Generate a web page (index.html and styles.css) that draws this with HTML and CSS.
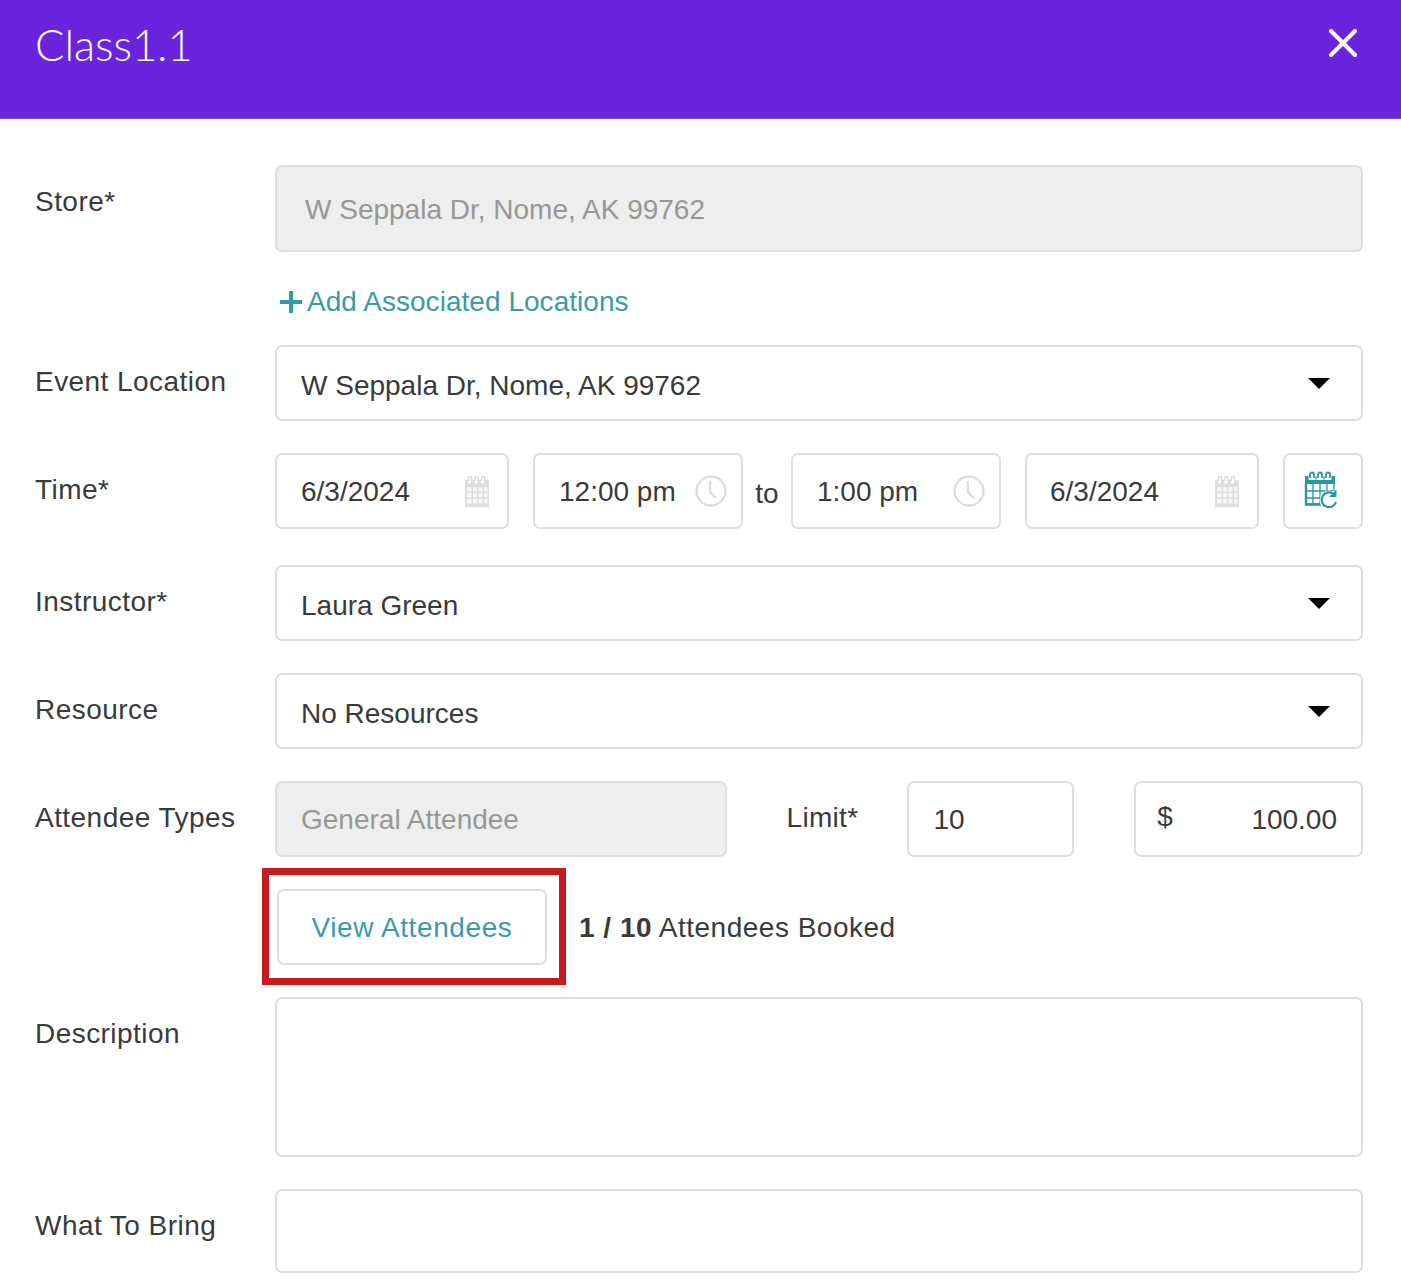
FILE: index.html
```html
<!DOCTYPE html>
<html lang="en">
<head>
<meta charset="utf-8">
<title>Class1.1</title>
<link rel="stylesheet" href="styles.css">
</head>
<body>
<svg class="defs" width="0" height="0" aria-hidden="true">
  <symbol id="cal" viewBox="0 0 26 33">
    <path fill="currentColor" d="M1 5h3v3.500h3V5h3.500v3.500h3V5H17v3.500h3V5h5v27H1z"/>
    <path fill="none" stroke="currentColor" stroke-width="1.500" d="M4.500 6V3a1.500 1.500 0 0 1 3 0v3M11 6V3a1.500 1.500 0 0 1 3 0v3M17.500 6V3a1.500 1.500 0 0 1 3 0v3"/>
    <path fill="#fff" opacity=".75" d="M3 12h4.500v4.500H3zM9 12h4v4.500H9zM14.500 12h4v4.500h-4zM20 12h3.500v4.500H20zM3 18h4.500v4.500H3zM9 18h4v4.500H9zM14.500 18h4v4.500h-4zM20 18h3.500v4.500H20zM3 24h4.500v4.500H3zM9 24h4v4.500H9zM14.500 24h4v4.500h-4zM20 24h3.500v4.500H20z"/>
  </symbol>
  <symbol id="clock" viewBox="0 0 32 32">
    <circle cx="16" cy="16" r="14.500" fill="none" stroke="currentColor" stroke-width="2.400"/>
    <path fill="none" stroke="currentColor" stroke-width="2.200" d="M15 6v11l6 6"/>
  </symbol>
</svg>
<main class="modal">
  <header class="head">
    <h1 class="title">Class1.1</h1>
    <svg class="close" viewBox="0 0 28 28"><path d="M2 2l24 24M26 2L2 26" fill="none" stroke="#fff" stroke-width="4" stroke-linecap="round"/></svg>
  </header>
  <form class="form">
    <div class="row">
      <label class="label">Store*</label>
      <div class="box box-disabled box-store">W Seppala Dr, Nome, AK 99762</div>
    </div>
    <div class="row row-add">
      <span></span>
      <a class="add"><span class="plus"></span>Add Associated Locations</a>
    </div>
    <div class="row">
      <label class="label">Event Location</label>
      <div class="box box-select">W Seppala Dr, Nome, AK 99762<i class="caret"></i></div>
    </div>
    <div class="row">
      <label class="label">Time*</label>
      <div class="time">
        <div class="box box-tight box-date">6/3/2024<svg class="ico-cal"><use href="#cal"/></svg></div>
        <div class="box box-tight box-clock">12:00 pm<svg class="ico-clock"><use href="#clock"/></svg></div>
        <span class="to">to</span>
        <div class="box box-tight box-clock">1:00 pm<svg class="ico-clock"><use href="#clock"/></svg></div>
        <div class="box box-tight box-date box-date-end">6/3/2024<svg class="ico-cal"><use href="#cal"/></svg></div>
        <div class="box box-repeat">
          <svg class="ico-repeat" viewBox="0 0 34 38">
            <path fill="none" stroke="#2a96a3" stroke-width="1.800" d="M6 7V3.500a2 2 0 0 1 4 0V7M14 7V3.500a2 2 0 0 1 4 0V7M22 7V3.500a2 2 0 0 1 4 0V7"/>
            <path fill="#2a96a3" d="M1 5h3.500v4h7V5h1v4h7V5h1v4h7V5H31v8H1z"/>
            <path fill="none" stroke="#2a96a3" stroke-width="1.300" d="M2 13v20h17M30 13v7M9 13v20M16 13v20M23 13v6M2 20h27M2 27h15"/>
            <path fill="none" stroke="#2a96a3" stroke-width="2.400" d="M2 13v20.500h15"/>
            <circle cx="25" cy="29" r="9.500" fill="#fff"/>
            <path d="M32 31a7.400 7.400 0 1 1-3-8.500" fill="none" stroke="#2a96a3" stroke-width="2.200"/>
            <path d="M32.500 18.500v7.500H25z" fill="#2a96a3"/>
          </svg>
        </div>
      </div>
    </div>
    <div class="row row-gap4">
      <label class="label">Instructor*</label>
      <div class="box box-select">Laura Green<i class="caret"></i></div>
    </div>
    <div class="row">
      <label class="label">Resource</label>
      <div class="box box-select">No Resources<i class="caret"></i></div>
    </div>
    <div class="row">
      <label class="label">Attendee Types</label>
      <div class="types">
        <div class="box box-tight box-disabled box-type">General Attendee</div>
        <span class="limit">Limit*</span>
        <div class="box box-tight box-limit">10</div>
        <div class="box box-tight box-price"><span class="dollar">$</span><span>100.00</span></div>
      </div>
    </div>
    <div class="row">
      <span></span>
      <div class="booked">
        <div class="view-wrap">
          <a class="view">View Attendees</a>
          <span class="redbox"></span>
        </div>
        <span class="count"><b>1 / 10</b> Attendees Booked</span>
      </div>
    </div>
    <div class="row">
      <label class="label">Description</label>
      <div class="box box-desc"></div>
    </div>
    <div class="row">
      <label class="label">What To Bring</label>
      <div class="box box-bring"></div>
    </div>
  </form>
</main>
</body>
</html>
```
FILE: styles.css
```css
* { box-sizing: border-box; }
html, body { margin: 0; padding: 0; background: #fff; }
body {
  font-family: "Liberation Sans", Arial, sans-serif;
  color: #3a3a3a;
  overflow: hidden;
}
.defs { position: absolute; }
.modal { width: 1401px; height: 1284px; overflow: hidden; }
.head {
  height: 119px;
  background: #6b24de;
  display: flex;
  justify-content: space-between;
  align-items: flex-start;
  padding: 18px 44px 0 35px;
  border-bottom: 1px solid #7b4adf;
}
.title {
  margin: 0;
  font-family: Lato, sans-serif;
  font-weight: 300;
  font-size: 43.500px;
  line-height: 52px;
  color: #fff;
}
.close { width: 28px; height: 28px; margin-top: 11px; }
.form {
  padding: 46px 38px 0 35px;
  display: flex;
  flex-direction: column;
  gap: 32px;
}
.row {
  display: grid;
  grid-template-columns: 240px 1088px;
  align-items: start;
}
.row-gap4 { margin-top: 4px; }
.row-add { margin: 0 0 -7px; height: 36px; }
.label {
  font-size: 28px;
  line-height: 34px;
  padding-top: 20px;
  letter-spacing: 0.45px;
}
.box {
  border: 2px solid #dfdfdf;
  border-radius: 7px;
  height: 76px;
  background: #fff;
  font-size: 28px;
  padding: 6px 24px 0;
  display: flex;
  align-items: center;
  color: #3a3a3a;
}
.box-tight { padding-top: 2px; }
.box-disabled { background: #eeeeee; color: #979797; }
.box-store { height: 87px; padding: 2px 28px 0; }
.box-select { justify-content: space-between; }
.caret {
  width: 0;
  height: 0;
  border-left: 11px solid transparent;
  border-right: 11px solid transparent;
  border-top: 11px solid #000;
  margin: -6px 7px 0 0;
}
.add {
  color: #3a9aa8;
  font-size: 28px;
  line-height: 36px;
  display: flex;
  align-items: center;
  padding-left: 5px;
  letter-spacing: 0.04px;
}
.plus {
  width: 22px;
  height: 22px;
  margin-right: 5px;
  background:
    linear-gradient(#2f9cab, #2f9cab) center / 100% 4px no-repeat,
    linear-gradient(#2f9cab, #2f9cab) center / 4px 100% no-repeat;
}
.time { display: flex; align-items: center; }
.box-date { width: 234px; justify-content: space-between; padding-right: 17px; }
.box-date-end { margin-left: 24px; padding-left: 23px; }
.box-clock { width: 210px; justify-content: space-between; padding-right: 14px; margin-left: 24px; }
.to { width: 48px; text-align: center; font-size: 28px; padding-top: 5px; }
.to + .box-clock { margin-left: 0; }
.box-repeat { width: 80px; margin-left: 24px; padding: 0 0 0 19px; }
.ico-cal { width: 26px; height: 33px; color: #dddddd; margin-top: -2px; flex: none; }
.ico-clock { width: 32px; height: 32px; color: #dddddd; margin-top: -2px; flex: none; }
.ico-repeat { width: 34px; height: 38px; margin-top: -2px; flex: none; }
.types { display: flex; align-items: flex-start; }
.box-type { width: 452px; }
.limit { width: 181px; padding: 20px 0 0 60px; font-size: 28px; line-height: 34px; letter-spacing: 0.3px; }
.box-limit { width: 167px; }
.box-price { width: 229px; margin-left: 60px; justify-content: space-between; padding-left: 21px; }
.dollar { margin-top: -6px; }
.booked { display: flex; align-items: center; }
.view-wrap { position: relative; margin-left: 2px; }
.view {
  display: flex;
  align-items: center;
  justify-content: center;
  width: 270px;
  height: 76px;
  padding-top: 2px;
  border: 2px solid #dfdfdf;
  border-radius: 7px;
  color: #3a9aa8;
  font-size: 28px;
  letter-spacing: 0.6px;
}
.redbox {
  position: absolute;
  left: -15px;
  top: -21px;
  width: 304px;
  height: 117px;
  border: 7px solid #c41c20;
}
.count { margin-left: 32px; padding-top: 2px; font-size: 28px; letter-spacing: 0.5px; }
.box-desc { height: 160px; }
.box-bring { height: 84px; }
```
